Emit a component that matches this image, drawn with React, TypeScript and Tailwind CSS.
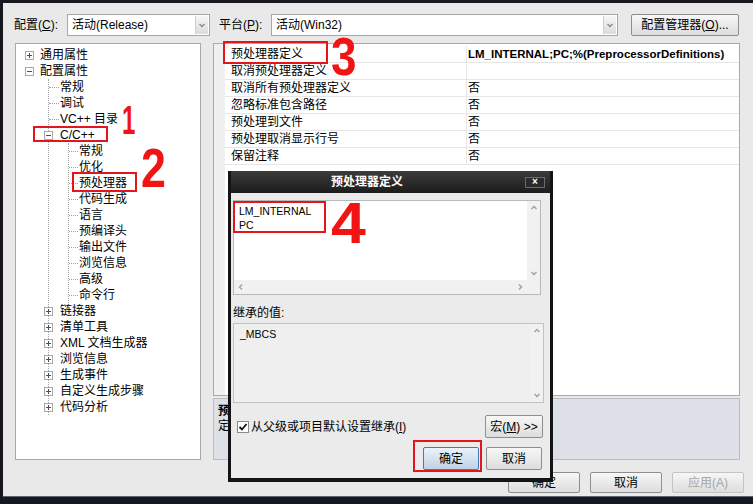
import React from "react";

const Chev = ({ dir, color = "#a0a0a0" }: { dir: "up" | "down" | "left" | "right"; color?: string }) => {
  const d: Record<string, string> = {
    up: "M1.5 5 L4 2.5 L6.5 5",
    down: "M1.5 3 L4 5.5 L6.5 3",
    left: "M5 1.5 L2.5 4 L5 6.5",
    right: "M3 1.5 L5.5 4 L3 6.5",
  };
  return (
    <svg width="8" height="8" viewBox="0 0 8 8" className="shrink-0">
      <path d={d[dir]} fill="none" stroke={color} strokeWidth="1.4" />
    </svg>
  );
};

const Exp = ({ plus }: { plus?: boolean }) => (
  <svg width="9" height="9" viewBox="0 0 9 9" className="shrink-0">
    <rect x="0.5" y="0.5" width="8" height="8" fill="white" stroke="#a8a8a8" />
    <path d="M2 4.5H7" stroke="#505050" />
    {plus && <path d="M4.5 2V7" stroke="#505050" />}
  </svg>
);

const Row0 = ({ label, plus }: { label: string; plus?: boolean }) => (
  <div className="flex items-center h-4 pl-[9px]">
    <Exp plus={plus} />
    <span className="ml-[6px]">{label}</span>
  </div>
);

const Leaf1 = ({ label }: { label: string }) => (
  <div className="flex items-center h-4">
    <div className="w-[10px] border-t border-dotted border-[#a0a0a0]" />
    <span className="ml-[1px]">{label}</span>
  </div>
);

const Exp1 = ({ label, plus }: { label: string; plus?: boolean }) => (
  <div className="flex items-center h-4 -ml-[5px]">
    <Exp plus={plus} />
    <span className="ml-[7px]">{label}</span>
  </div>
);

const Leaf2 = ({ label }: { label: string }) => (
  <div className="flex items-center h-4">
    <div className="w-[9px] border-t border-dotted border-[#a0a0a0]" />
    <span className="ml-[1px]">{label}</span>
  </div>
);

const Combo = ({ w, text }: { w: string; text: string }) => (
  <div className={"flex h-[22px] bg-white border border-[#a7a7a7] " + w}>
    <div className="flex-1 pl-[4px] flex items-center text-[12px]">{text}</div>
    <div className="w-[13px] my-[1px] mr-[1px] bg-gradient-to-b from-[#f6f6f6] to-[#dcdcdc] border-l border-[#cfcfcf] flex items-center justify-center">
      <Chev dir="down" color="#8a8a8a" />
    </div>
  </div>
);

const Btn = ({ w, children, disabled }: { w: string; children: React.ReactNode; disabled?: boolean }) => (
  <div
    className={
      "h-[21px] flex items-center justify-center rounded-[2px] border bg-gradient-to-b from-[#f7f7f7] to-[#dddddd] text-[12px] " +
      w +
      (disabled ? " border-[#c4c4c4] text-[#a6a6a6]" : " border-[#8e8e8e] text-black")
    }
  >
    {children}
  </div>
);

const props: [string, string, boolean][] = [
  ["预处理器定义", "LM_INTERNAL;PC;%(PreprocessorDefinitions)", true],
  ["取消预处理器定义", "", false],
  ["取消所有预处理器定义", "否", false],
  ["忽略标准包含路径", "否", false],
  ["预处理到文件", "否", false],
  ["预处理取消显示行号", "否", false],
  ["保留注释", "否", false],
];

export default function App() {
  return (
    <div className="relative w-[753px] h-[504px] overflow-hidden bg-[#15181f] pt-[3px] pl-[3px] pb-[7px] flex flex-col font-['Liberation_Sans','Noto_Sans_CJK_SC',sans-serif] text-black">
      <div className="flex-1 bg-[#e9e9e9] flex flex-col border-b border-[#5a6272]">
        {/* top row */}
        <div className="mt-[11px] h-[22px] flex items-center pl-[11px] text-[12px]">
          <div className="w-[53px]">
            配置(<u>C</u>):
          </div>
          <Combo w="w-[143px]" text="活动(Release)" />
          <div className="ml-[9px] w-[52px]">
            平台(<u>P</u>):
          </div>
          <Combo w="w-[347px]" text="活动(Win32)" />
          <div className="ml-[13px] w-[108px] h-[22px] flex items-center justify-center rounded-[2px] border border-[#8e8e8e] bg-gradient-to-b from-[#f7f7f7] to-[#dddddd]">
            配置管理器(<u>O</u>)...
          </div>
        </div>

        {/* main row */}
        <div className="mt-[7px] flex pl-[12px]">
          {/* tree */}
          <div className="w-[186px] h-[417px] bg-white border border-[#a9a9a9] pt-[3px] text-[12px] leading-4">
            <Row0 plus label="通用属性" />
            <Row0 label="配置属性" />
            <div className="ml-[32px] border-l border-dotted border-[#a8a8a8]">
              <Leaf1 label="常规" />
              <Leaf1 label="调试" />
              <Leaf1 label="VC++ 目录" />
              <Exp1 label="C/C++" />
              <div className="ml-[19px] border-l border-dotted border-[#a8a8a8]">
                {["常规", "优化", "预处理器", "代码生成", "语言", "预编译头", "输出文件", "浏览信息", "高级", "命令行"].map((l, i) => (
                  <Leaf2 key={i} label={l} />
                ))}
              </div>
              {["链接器", "清单工具", "XML 文档生成器", "浏览信息", "生成事件", "自定义生成步骤", "代码分析"].map((l, i) => (
                <Exp1 key={i} plus label={l} />
              ))}
            </div>
          </div>

          {/* right panel */}
          <div className="ml-[12px] w-[527px] h-[417px] flex flex-col">
            <div className="h-[353px] bg-white border border-[#a9a9a9] flex">
              <div className="w-[11px] bg-[#f0f0f0]" />
              <div className="flex-1 flex flex-col pt-[2px]">
                {props.map(([n, v, b], i) => (
                  <div key={i} className="flex h-[17px] border-b border-[#e6e6e6] leading-[16px]">
                    <div className="w-[242px] pl-[6px] text-[12px] border-r border-[#e6e6e6]">{n}</div>
                    <div className={"pl-[1px] " + (b ? "font-bold text-[11.5px]" : "text-[12px]")}>{v}</div>
                  </div>
                ))}
              </div>
            </div>
            <div className="mt-[2px] h-[62px] bg-[#dde0e7] border border-[#b9bdc6] pl-[4px] pt-[5px] text-[12px] leading-[15px]">
              <div className="font-bold">预处理器定义</div>
              <div>定义</div>
            </div>
          </div>
        </div>

        {/* bottom buttons */}
        <div className="mt-[12px] flex pl-[505px] gap-[10px]">
          <Btn w="w-[72px]">确定</Btn>
          <Btn w="w-[72px]">取消</Btn>
          <Btn w="w-[72px]" disabled>
            应用(A)
          </Btn>
        </div>
      </div>

      {/* dialog */}
      <div className="absolute left-[228px] top-[171px] w-[325px] h-[311px] bg-[#141414] px-[3px] pb-[4px] flex flex-col">
        <div className="h-[22px] flex items-center bg-gradient-to-b from-[#3c3c3c] to-[#1c1c1c]">
          <div className="flex-1 pr-[22px] flex justify-center text-white font-bold text-[12px]">预处理器定义</div>
          <div className="w-[20px] h-[11px] mr-[5px] border border-[#6a6a6a] bg-[#2a2a2a] flex items-center justify-center text-white text-[10px] leading-none font-bold">
            ×
          </div>
        </div>
        <div className="flex-1 bg-[#ebebeb] pl-[2px] pr-[6px] pt-[7px] flex flex-col text-[12px]">
          <div className="w-[308px] h-[95px] border border-[#b8b8b8] bg-white flex flex-col">
            <div className="flex flex-1">
              <div className="flex-1 pl-[5px] pt-[3px] text-[10.5px] leading-[14px]">
                <div>LM_INTERNAL</div>
                <div>PC</div>
              </div>
              <div className="w-[13px] bg-[#f1f1f1] flex flex-col justify-between items-center py-[3px]">
                <Chev dir="up" />
                <Chev dir="down" />
              </div>
            </div>
            <div className="h-[14px] flex bg-[#f1f1f1]">
              <div className="flex-1 flex items-center justify-between px-[3px]">
                <Chev dir="left" />
                <Chev dir="right" />
              </div>
              <div className="w-[13px]" />
            </div>
          </div>
          <div className="mt-[10px] leading-4">继承的值:</div>
          <div className="mt-[2px] w-[311px] h-[80px] border border-[#c2c2c2] bg-[#efefef] flex">
            <div className="flex-1 pl-[6px] pt-[3px] text-[10.5px] leading-[14px]">_MBCS</div>
            <div className="w-[13px] bg-[#f1f1f1] flex flex-col justify-between items-center py-[3px]">
              <Chev dir="up" />
              <Chev dir="down" />
            </div>
          </div>
          <div className="mt-[12px] h-[23px] flex items-center">
            <div className="ml-[4px] w-[12px] h-[12px] bg-white border border-[#8a8a8a] flex items-center justify-center">
              <svg width="10" height="10" viewBox="0 0 10 10">
                <path d="M1.5 5 L4 7.5 L8.5 2" fill="none" stroke="#111" strokeWidth="1.8" />
              </svg>
            </div>
            <span className="ml-[2px]">
              从父级或项目默认设置继承(<u>I</u>)
            </span>
            <div className="ml-auto mr-[1px] w-[58px] h-[23px] flex items-center justify-center rounded-[2px] border border-[#8e8e8e] bg-gradient-to-b from-[#f7f7f7] to-[#dddddd]">
              宏(<u>M</u>) &gt;&gt;
            </div>
          </div>
          <div className="mt-[9px] flex justify-end gap-[7px] mr-[2px]">
            <div className="w-[56px] h-[23px] flex items-center justify-center rounded-[2px] border border-[#3c7fb1] bg-gradient-to-b from-[#eaf2fa] to-[#bfd3e6]">
              确定
            </div>
            <div className="w-[56px] h-[23px] flex items-center justify-center rounded-[2px] border border-[#8e8e8e] bg-gradient-to-b from-[#f7f7f7] to-[#dddddd]">
              取消
            </div>
          </div>
        </div>
      </div>

      {/* red annotations */}
      <div className="absolute left-[33px] top-[126px] w-[75px] h-[16px] border-2 border-[#e4161c]" />
      <div className="absolute left-[72px] top-[172px] w-[65px] h-[20px] border-2 border-[#e4161c]" />
      <div className="absolute left-[223px] top-[41px] w-[105px] h-[23px] border-2 border-[#e4161c]" />
      <div className="absolute left-[233px] top-[201px] w-[93px] h-[32px] border-2 border-[#e4161c]" />
      <div className="absolute left-[413px] top-[440px] w-[69px] h-[32px] border-2 border-[#e4161c]" />

      <div className="absolute left-[122px] top-[100px] text-[40px] leading-none font-bold text-[#f01414] font-['Liberation_Sans',sans-serif] scale-x-60 origin-left">
        1
      </div>
      <div className="absolute left-[141px] top-[140px] text-[56px] leading-none font-bold text-[#f01414] font-['Liberation_Sans',sans-serif] scale-x-80 origin-left">
        2
      </div>
      <div className="absolute left-[331px] top-[29px] text-[54px] leading-none font-bold text-[#f01414] font-['Liberation_Sans',sans-serif] scale-x-85 origin-left">
        3
      </div>
      <div className="absolute left-[331px] top-[195px] text-[57px] leading-none font-bold text-[#f01414] font-['Liberation_Sans',sans-serif] scale-x-110 origin-left">
        4
      </div>
    </div>
  );
}
